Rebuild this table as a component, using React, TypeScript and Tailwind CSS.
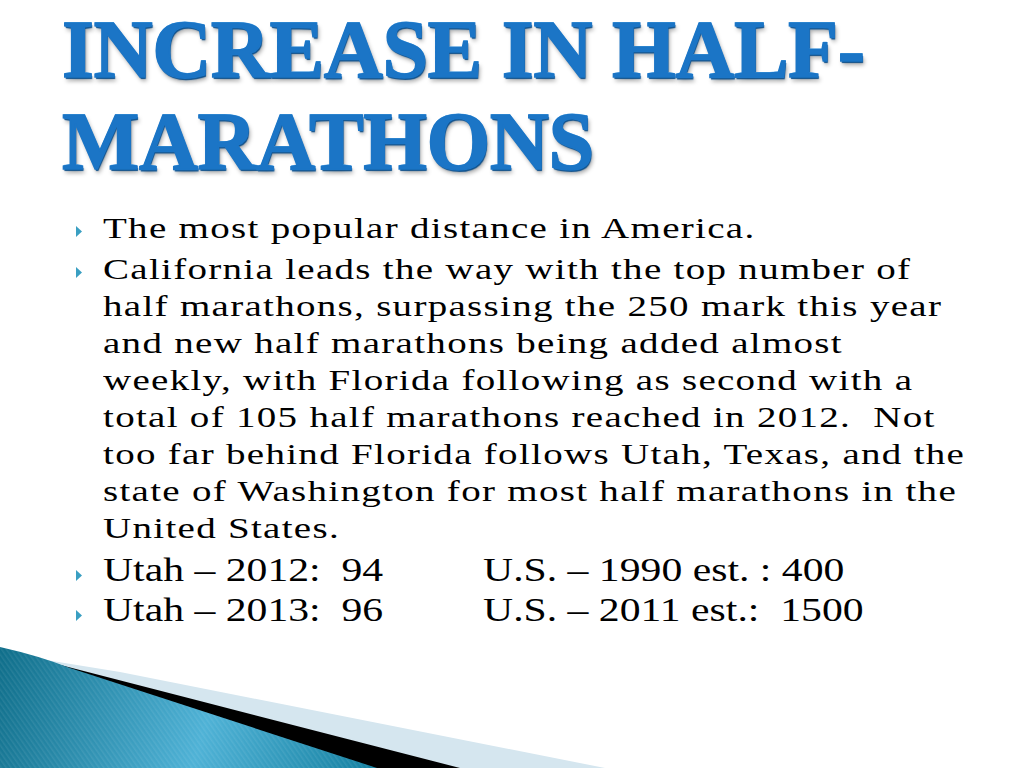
import React from 'react';

const Bullet = ({ top }: { top: string }) => (
  <svg width="6" height="11" viewBox="0 0 6 11" className={`shrink-0 ${top}`}>
    <polygon points="0,0 6,5.5 0,11" fill="#3a9fc2" />
  </svg>
);

const Decoration = () => (
  <svg className="absolute left-0 bottom-0" width="1024" height="130" viewBox="0 638 1024 130">
    <defs>
      <linearGradient id="teal" x1="0" y1="648" x2="380" y2="768" gradientUnits="userSpaceOnUse">
        <stop offset="0" stopColor="#0f6e8a" />
        <stop offset="0.55" stopColor="#4fb2d6" />
        <stop offset="1" stopColor="#137f9f" />
      </linearGradient>
      <pattern id="stripes" width="4" height="4" patternUnits="userSpaceOnUse" patternTransform="rotate(-35)">
        <rect width="1.5" height="4" fill="#ffffff" opacity="0.08" />
      </pattern>
    </defs>
    <polygon points="40,659 120,672 605,768 0,768" fill="#d5e6ef" />
    <polygon points="45,661 200,701 460,768 0,768" fill="#000000" />
    <path d="M0,647 Q40,656 70,668 L377,768 L0,768 Z" fill="url(#teal)" />
    <path d="M0,647 Q40,656 70,668 L377,768 L0,768 Z" fill="url(#stripes)" />
  </svg>
);

export default function App() {
  return (
    <div className="relative w-[1024px] h-[768px] overflow-hidden bg-white font-['Liberation_Serif',serif]">
      <h1 className="pl-[62px] pt-[4px] font-['Liberation_Serif',serif] text-[82px] leading-[92px] font-bold text-[#1b75c6] tracking-[-0.5px] whitespace-nowrap [-webkit-text-stroke:1.5px_#1b75c6] [text-shadow:0_-1px_0_#62aeea,1px_2px_1px_#0d4f8a,2px_4px_4px_rgba(0,0,0,0.35)]">
        INCREASE IN HALF-
        <br />
        MARATHONS
      </h1>
      <ul className="mt-[21px] pl-[76px] text-[30px] leading-[37px] text-black tracking-[1px]">
        <li className="flex items-start gap-[21px]">
          <Bullet top="mt-[17px]" />
          <div className="origin-left scale-x-[1.3] whitespace-nowrap">The most popular distance in America.</div>
        </li>
        <li className="mt-[4px] flex items-start gap-[21px]">
          <Bullet top="mt-[17px]" />
          <div className="origin-left scale-x-[1.3] whitespace-nowrap">
            California leads the way with the top number of
            <br />
            half marathons, surpassing the 250 mark this year
            <br />
            and new half marathons being added almost
            <br />
            weekly, with Florida following as second with a
            <br />
            total of 105 half marathons reached in 2012.&nbsp; Not
            <br />
            too far behind Florida follows Utah, Texas, and the
            <br />
            state of Washington for most half marathons in the
            <br />
            United States.
          </div>
        </li>
        <li className="mt-[4px] flex items-start gap-[21px] text-[34px] leading-[40px] tracking-normal">
          <Bullet top="mt-[20px]" />
          <div className="flex origin-left scale-x-[1.226] whitespace-pre">
            <span className="w-[310px]">Utah – 2012:  94</span>
            <span>U.S. – 1990 est. : 400</span>
          </div>
        </li>
        <li className="flex items-start gap-[21px] text-[34px] leading-[40px] tracking-normal">
          <Bullet top="mt-[20px]" />
          <div className="flex origin-left scale-x-[1.226] whitespace-pre">
            <span className="w-[310px]">Utah – 2013:  96</span>
            <span>U.S. – 2011 est.:  1500</span>
          </div>
        </li>
      </ul>
      <Decoration />
    </div>
  );
}
